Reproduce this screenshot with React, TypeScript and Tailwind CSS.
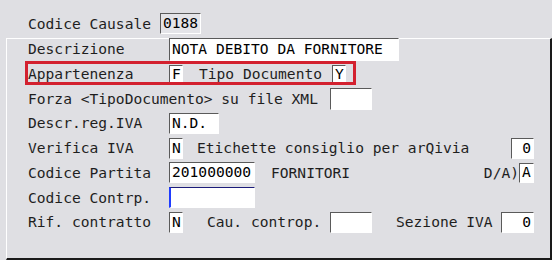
const mono = { fontFamily: '"DejaVu Sans Mono", "Liberation Mono", monospace' }

function Field({
  w,
  h = "h-[21px]",
  value = "",
  right = false,
  focus = false,
  dim = false,
}: {
  w: string
  h?: string
  value?: string
  right?: boolean
  focus?: boolean
  dim?: boolean
}) {
  const base = `${w} ${h} flex items-center shrink-0 whitespace-pre leading-none text-black border-b border-r border-b-white border-r-white`
  const edge = focus
    ? "border-t border-l-2 border-t-[#1c1c7a] border-l-[#1f3cff]"
    : "border-t border-l border-t-[#5a5a5a] border-l-[#5a5a5a]"
  const bg = dim ? "bg-[#e4e4e8]" : "bg-white"
  const align = right ? "justify-end pr-[2px]" : "pl-[2px]"
  return <div className={`${base} ${edge} ${bg} ${align}`}>{value}</div>
}

function Row({ children }: { children: React.ReactNode }) {
  return <div className="flex items-center h-[24.7px] pl-[21px] pr-[16px]">{children}</div>
}

export default function App() {
  return (
    <div
      className="relative w-[552px] h-[260px] bg-[#dfdfe3] text-[14.6px] text-[#1e1e1e] overflow-hidden"
      style={mono}
    >
      {/* header field */}
      <div className="flex items-center pt-[13px] pl-[28px] h-[34px]">
        <span className="w-[132px] whitespace-pre">Codice Causale</span>
        <Field w="w-[41px]" value="0188" dim />
      </div>

      {/* framed panel */}
      <div className="ml-[6px] mt-[4px] h-[222px] border-t border-l border-t-white border-l-white border-r-2 border-b-2 border-r-[#1a1a1a] border-b-[#1a1a1a]">
        <div className="-mt-[2px]">
          <Row>
            <span className="w-[141px]">Descrizione</span>
            <Field w="w-[230px]" h="h-[23px]" value="NOTA DEBITO DA FORNITORE" />
          </Row>
          <Row>
            <span className="w-[141px]">Appartenenza</span>
            <Field w="w-[14px]" h="h-[19px]" value="F" />
            <span className="ml-[16px] w-[133px] whitespace-pre">Tipo Documento</span>
            <Field w="w-[14px]" h="h-[19px]" value="Y" />
          </Row>
          <Row>
            <span className="w-[302px] whitespace-pre">Forza &lt;TipoDocumento&gt; su file XML</span>
            <Field w="w-[42px]" h="h-[22px]" />
          </Row>
          <Row>
            <span className="w-[141px]">Descr.reg.IVA</span>
            <Field w="w-[50px]" value="N.D." />
          </Row>
          <Row>
            <span className="w-[141px]">Verifica IVA</span>
            <Field w="w-[14px]" value="N" />
            <span className="ml-[14px] whitespace-pre">Etichette consiglio per arQivia</span>
            <div className="ml-auto">
              <Field w="w-[23px]" value="0" right />
            </div>
          </Row>
          <Row>
            <span className="w-[141px]">Codice Partita</span>
            <Field w="w-[86px]" value="201000000" />
            <span className="ml-[16px]">FORNITORI</span>
            <span className="ml-auto">D/A)</span>
            <Field w="w-[15px]" h="h-[20px]" value="A" />
          </Row>
          <Row>
            <span className="w-[141px]">Codice Contrp.</span>
            <Field w="w-[86px]" focus />
          </Row>
          <Row>
            <span className="w-[141px]">Rif. contratto</span>
            <Field w="w-[14px]" value="N" />
            <span className="ml-[24px] w-[123px] whitespace-pre">Cau. controp.</span>
            <Field w="w-[42px]" />
            <span className="ml-[24px] w-[105px] whitespace-pre">Sezione IVA</span>
            <Field w="w-[33px]" value="0" right />
          </Row>
        </div>
      </div>

      {/* annotation box */}
      <div className="absolute left-[25px] top-[61px] w-[331px] h-[24px] border-[3px] border-[#d3212f] pointer-events-none" />
    </div>
  )
}
